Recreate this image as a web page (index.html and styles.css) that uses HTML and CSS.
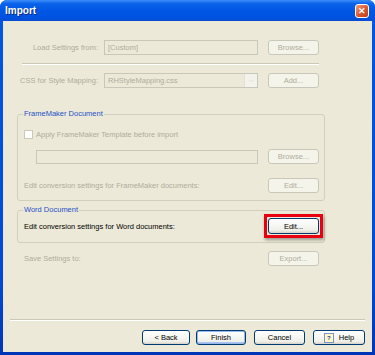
FILE: index.html
```html
<!DOCTYPE html>
<html lang="en">
<head>
    <meta charset="UTF-8">
    <meta name="viewport" content="width=device-width, initial-scale=1.0">
    <title>Import</title>
    <link rel="stylesheet" href="styles.css">
</head>
<body>
    <div class="window">
        <div class="titlebar">
            <span class="title">Import</span>
            <span class="close">&#x2715;</span>
        </div>
        <div class="content">
            <div class="row top">
                <span class="label off">Load Settings from:</span>
                <span class="field off">[Custom]</span>
                <button class="btn" disabled>Browse...</button>
            </div>
            <div class="sep"></div>
            <div class="row second">
                <span class="label off">CSS for Style Mapping:</span>
                <span class="field off select">RHStyleMapping.css<span class="arrow">&#x2335;</span></span>
                <button class="btn" disabled>Add...</button>
            </div>

            <fieldset class="group fm">
                <legend>FrameMaker Document</legend>
                <div class="row check">
                    <span class="box"></span>
                    <span class="off">Apply FrameMaker Template before import</span>
                </div>
                <div class="row path">
                    <span class="field wide"></span>
                    <button class="btn" disabled>Browse...</button>
                </div>
                <div class="row edit">
                    <span class="off">Edit conversion settings for FrameMaker documents:</span>
                    <button class="btn" disabled>Edit...</button>
                </div>
            </fieldset>

            <fieldset class="group word">
                <legend>Word Document</legend>
                <div class="row">
                    <span>Edit conversion settings for Word documents:</span>
                    <span class="mark"><button class="btn on">Edit...</button></span>
                </div>
            </fieldset>

            <div class="row save">
                <span class="off">Save Settings to:</span>
                <button class="btn" disabled>Export...</button>
            </div>

            <div class="footer">
                <div class="sep long"></div>
                <div class="buttons">
                    <button class="btn on back">&lt; Back</button>
                    <button class="btn on finish">Finish</button>
                    <button class="btn on cancel">Cancel</button>
                    <button class="btn on help"><span class="q">?</span>Help</button>
                </div>
            </div>
        </div>
    </div>
</body>
</html>
```

FILE: styles.css
```css
body {
    margin: 0;
    font-family: "Liberation Sans", Arial, sans-serif;
    font-size: 7.5px;
    background: #fff;
}
.window {
    width: 375px;
    height: 355px;
    background: linear-gradient(to bottom, #0058e6, #0049d8 80%, #0035b8);
    border-radius: 7px 7px 0 0;
    overflow: hidden;
}
.titlebar {
    height: 21px;
    display: flex;
    align-items: center;
    justify-content: space-between;
    padding: 0 6px 0 5px;
    background: linear-gradient(to bottom, #3c8ef9 0%, #0a62ea 18%, #0056e4 55%, #0052e0 85%, #0a4bd0 100%);
}
.title {
    color: #fff;
    font-weight: bold;
    font-size: 10px;
    text-shadow: 1px 1px 0 #0a2a8a;
}
.close {
    width: 12px;
    height: 12px;
    margin-top: 1px;
    border: 1px solid #fff;
    border-radius: 3px;
    background: linear-gradient(135deg, #f0a080, #dc5a32 50%, #c23c16);
    color: #fff;
    font-size: 9px;
    font-weight: bold;
    line-height: 12px;
    text-align: center;
}
.content {
    margin: 0 3px;
    height: 331px;
    background: #ece9d8;
    display: flex;
    flex-direction: column;
    padding-left: 14px;
    box-sizing: border-box;
    color: #000;
}
.row {
    display: flex;
    align-items: center;
}
.off {
    color: #b0ac9c;
}
.label {
    width: 81px;
    text-align: right;
    margin-right: 6px;
}
.field {
    box-sizing: border-box;
    width: 154px;
    height: 15px;
    border: 1px solid #c9c7ba;
    background: #ece9d8;
    padding: 0 3px;
    display: flex;
    align-items: center;
    position: relative;
}
.select .arrow {
    position: absolute;
    right: 0;
    top: 0;
    bottom: 0;
    width: 12px;
    border-left: 1px solid #e4e2d6;
    background: #f3f2ec;
    color: #c4c2b6;
    font-size: 6px;
    display: flex;
    align-items: center;
    justify-content: center;
}
.btn {
    box-sizing: border-box;
    width: 51px;
    height: 15px;
    margin: 0 0 0 10px;
    padding: 0;
    border: 1px solid #c9c7ba;
    border-radius: 3px;
    background: #f5f4ea;
    color: #b0ac9c;
    font-family: inherit;
    font-size: 7.5px;
}
.btn.on {
    border-color: #003c74;
    background: linear-gradient(to bottom, #fff, #f0f0ea 80%, #d6d0c5);
    color: #000;
}
.top {
    margin-top: 19px;
}
.sep {
    margin: 8px 0 0 5px;
    width: 297px;
    height: 0;
    border-top: 1px solid #cac8bb;
    border-bottom: 1px solid #fff;
}
.second {
    margin-top: 8px;
}
.group {
    box-sizing: border-box;
    width: 308px;
    margin: 0;
    padding: 0 5px 0 6px;
    border: 1px solid #d0d0bf;
    border-radius: 3px;
}
.group legend {
    color: #1e50c8;
    padding: 0 1px;
    margin-left: -1px;
    height: 10px;
    line-height: 10px;
}
.group .row {
    justify-content: space-between;
}
.fm {
    margin-top: 21px;
    height: 92px;
    padding-top: 10px;
}
.check {
    height: 10px;
    justify-content: flex-start !important;
}
.box {
    width: 7px;
    height: 7px;
    border: 1px solid #cac8bb;
    background: #fff;
    margin-right: 3px;
}
.path {
    margin-top: 10px;
}
.wide {
    width: 222px;
    height: 14px;
    margin-left: 12px;
}
.edit {
    margin-top: 14px;
}
.word {
    margin-top: 4px;
    height: 38px;
    padding-top: 3px;
}
.word .row {
    height: 16px;
}
.word .btn {
    margin: 0;
    height: 16px;
}
.mark {
    display: flex;
    margin: -4px -4px;
    padding: 1px;
    border: 3px solid #e8000e;
    box-shadow: 1px 2px 3px rgba(0, 0, 0, 0.35);
}
.save {
    box-sizing: border-box;
    margin-top: 8px;
    padding-left: 7px;
    width: 302px;
    justify-content: space-between;
}
.footer {
    margin-top: auto;
    margin-left: -7px;
}
.sep.long {
    width: 355px;
    margin: 0;
}
.buttons {
    display: flex;
    justify-content: flex-end;
    margin: 9px 0 7px;
    width: 355px;
}
.buttons .btn {
    margin: 0;
}
.back {
    width: 48px;
}
.finish {
    width: 50px;
    margin-left: 6px !important;
    box-shadow: inset 0 0 0 1px #98b8ea, inset 0 -1px 0 1px #a8c4f0;
}
.cancel {
    margin-left: 8px !important;
}
.help {
    width: 52px;
    margin-left: 8px !important;
    display: flex;
    align-items: center;
    justify-content: center;
}
.q {
    width: 8px;
    height: 8px;
    margin-right: 5px;
    border: 1px solid #7a96c8;
    background: #fff7c8;
    color: #1b3c9a;
    font-size: 6px;
    font-weight: bold;
    line-height: 8px;
    text-align: center;
}
```
